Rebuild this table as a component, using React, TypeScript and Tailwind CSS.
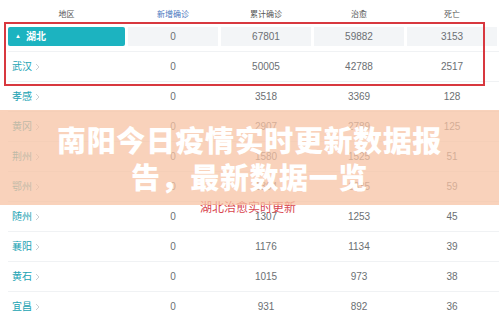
import React from "react";

type Row = { name: string; added: string; total: string; cured: string; dead: string };

const rows: Row[] = [
  { name: "武汉", added: "0", total: "50005", cured: "42788", dead: "2517" },
  { name: "孝感", added: "0", total: "3518", cured: "3369", dead: "128" },
  { name: "黄冈", added: "0", total: "2907", cured: "2789", dead: "125" },
  { name: "荆州", added: "0", total: "1580", cured: "1525", dead: "51" },
  { name: "鄂州", added: "0", total: "1394", cured: "1335", dead: "59" },
  { name: "随州", added: "0", total: "1307", cured: "1253", dead: "45" },
  { name: "襄阳", added: "0", total: "1176", cured: "1134", dead: "39" },
  { name: "黄石", added: "0", total: "1015", cured: "973", dead: "38" },
  { name: "宜昌", added: "0", total: "931", cured: "892", dead: "36" },
];

const grid = "grid grid-cols-[117px_90px_90px_90px_90px] gap-x-[3px]";

function Chevron() {
  return (
    <svg width="5" height="8" viewBox="0 0 5 8" className="ml-[3px]">
      <path d="M1 1l3 3-3 3" fill="none" stroke="#c4c8cc" strokeWidth="0.9" />
    </svg>
  );
}

export default function App() {
  return (
    <div className="relative w-[499px] h-[317px] overflow-hidden bg-white font-['Liberation_Sans','Noto_Sans_CJK_SC',sans-serif]">
      <div className="pl-[8px]">
        {/* header */}
        <div className={`${grid} h-[22px] items-center pt-[8px] text-[8px] text-[#555]`}>
          <div className="text-center">地区</div>
          <div className="text-center text-[#4a78c0]">新增确诊</div>
          <div className="text-center">累计确诊</div>
          <div className="text-center">治愈</div>
          <div className="text-center">死亡</div>
        </div>

        {/* province row */}
        <div className={`${grid} h-[30px] py-[5px] text-[10px] text-[#6b6f73] border-b border-[#f0f2f4]`}>
          <div className="flex items-center gap-[5px] rounded-[2px] bg-[#1cb3c0] pl-[7px] font-bold text-white">
            <span className="text-[6px]">▲</span>
            <span>湖北</span>
          </div>
          <div className="flex items-center justify-center bg-[#f3f5f7]">0</div>
          <div className="flex items-center justify-center bg-[#f3f5f7]">67801</div>
          <div className="flex items-center justify-center bg-[#f3f5f7]">59882</div>
          <div className="flex items-center justify-center bg-[#f3f5f7]">3153</div>
        </div>

        {rows.map((r) => (
          <div
            key={r.name}
            className={`${grid} h-[30px] items-center text-[10px] text-[#6b6f73] border-b border-[#f0f2f4]`}
          >
            <div className="flex items-center pl-[4px] text-[#21a3b3]">
              <span>{r.name}</span>
              <Chevron />
            </div>
            <div className="text-center">{r.added}</div>
            <div className="text-center">{r.total}</div>
            <div className="text-center">{r.cured}</div>
            <div className="text-center">{r.dead}</div>
          </div>
        ))}
      </div>

      {/* red highlight box */}
      <div className="absolute left-[4px] top-[22px] w-[481px] h-[64px] border-2 border-[#d8383f]" />

      {/* caption */}
      <div className="absolute left-[200px] top-[200px] text-[12px] leading-[14px] text-[#d8474f] font-['Noto_Sans_CJK_SC',sans-serif]">
        湖北治愈实时更新
      </div>

      {/* title band */}
      <div className="absolute left-0 right-0 top-[110px] h-[95px] flex items-center justify-center bg-[rgba(247,194,163,0.74)]">
        <div className="text-center text-white font-black text-[29px] leading-[37px] tracking-[0.6px] font-['Noto_Sans_CJK_SC',sans-serif]">
          南阳今日疫情实时更新数据报
          <br />
          告，最新数据一览
        </div>
      </div>
    </div>
  );
}
